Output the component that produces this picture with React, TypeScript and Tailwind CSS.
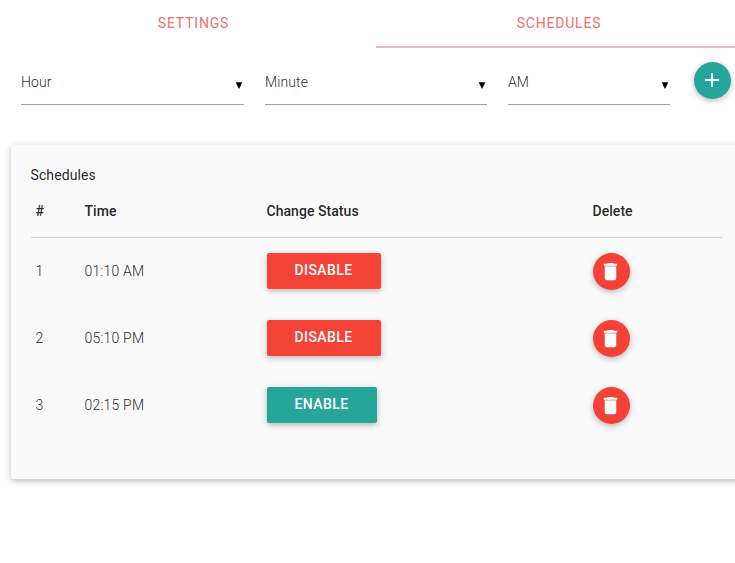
const raised =
  "shadow-[0_2px_5px_0_rgba(0,0,0,0.16),0_2px_8px_0_rgba(0,0,0,0.12)]";

function Select({ label, width }: { label: string; width: string }) {
  return (
    <div
      className={`flex h-[44px] shrink-0 items-start justify-between border-b border-[#9e9e9e] ${width}`}
    >
      <span className="text-[14px] leading-[20px] pt-[11px] font-light tracking-[0.1px] text-black/87">{label}</span>
      <svg className="mt-[21px] mr-[1px] h-[7px] w-[8px]" viewBox="0 0 8 7">
        <path d="M0.6 0.3H7.4L4 7z" fill="#000" />
      </svg>
    </div>
  );
}

function TrashButton() {
  return (
    <button
      aria-label="Delete"
      className={`ml-[0.5px] flex size-[37px] items-center justify-center rounded-full bg-[#f44336] ${raised}`}
    >
      <svg className="mr-[2px] mb-[1px] size-[23px]" viewBox="0 0 24 24" fill="#fff">
        <path d="M6 19c0 1.1.9 2 2 2h8c1.1 0 2-.9 2-2V7H6v12zM19 4h-3.500l-1-1h-5l-1 1H5v2h14V4z" />
        <path d="M6 6h12v1H6z" fillOpacity="0.8" />
      </svg>
    </button>
  );
}

const rows = [
  { id: 1, time: "01:10 AM", enabled: true },
  { id: 2, time: "05:10 PM", enabled: true },
  { id: 3, time: "02:15 PM", enabled: false },
];

const columns = "grid grid-cols-[49px_182px_326px_1fr] pl-[4.5px]";

export default function App() {
  return (
    <div className="h-[563px] w-full overflow-hidden bg-white font-[Roboto,sans-serif] text-[14px] text-black/87">
      <nav className="ml-[10px] flex h-[48px] w-[732px] text-center text-[14px] leading-[47px] tracking-[0.8px] text-[#ee6e73]">
        <div className="w-[366px] pl-[1px]">SETTINGS</div>
        <div className="w-[366px] border-b-2 border-[#f6b2b5]">SCHEDULES</div>
      </nav>

      <div className="flex h-[97px] w-[760px] pt-[13px] pl-[21px]">
        <div className="flex gap-[21px]">
          <Select label="Hour" width="w-[223px]" />
          <Select label="Minute" width="w-[222px]" />
          <Select label="AM" width="w-[162px]" />
        </div>
        <button
          aria-label="Add"
          className={`mt-[1px] ml-[24px] flex size-[37px] shrink-0 items-center justify-center rounded-full bg-[#26a69a] ${raised}`}
        >
          <svg className="mr-[1px] mb-[1px] size-[24px]" viewBox="0 0 24 24" fill="#fff">
            <path d="M19 13h-6v6h-2v-6H5v-2h6V5h2v6h6v2z" />
          </svg>
        </button>
      </div>

      <section
        className={`ml-[11px] h-[334px] w-[731px] rounded-[2px] bg-[#fafafa] pt-[20px] pl-[19px] ${raised}`}
      >
        <h2 className="pl-[0.5px] leading-[20px] tracking-[0.1px]">Schedules</h2>
        <div className="ml-[1px] w-[691px]">
          <div className={`${columns} h-[53px] border-b border-[#d0d0d0] pt-[16px] leading-[20px] font-medium tracking-[0.05px]`}>
            <span>#</span>
            <span>Time</span>
            <span>Change Status</span>
            <span>Delete</span>
          </div>
          {rows.map((row) => (
            <div key={row.id} className={`${columns} h-[67px] items-center`}>
              <span className="font-light">{row.id}</span>
              <span className="font-light tracking-[0.2px]">{row.time}</span>
              <div className="pb-[2px] pl-[0.5px]">
                {row.enabled ? (
                  <button
                    className={`block h-[36px] w-[114px] rounded-[2px] bg-[#f44336] pr-[1px] text-[14px] font-medium tracking-[0.4px] text-white ${raised}`}
                  >
                    DISABLE
                  </button>
                ) : (
                  <button
                    className={`block h-[36px] w-[110px] rounded-[2px] bg-[#26a69a] pr-[1px] text-[14px] font-medium tracking-[0.4px] text-white ${raised}`}
                  >
                    ENABLE
                  </button>
                )}
              </div>
              <TrashButton />
            </div>
          ))}
        </div>
      </section>
    </div>
  );
}
